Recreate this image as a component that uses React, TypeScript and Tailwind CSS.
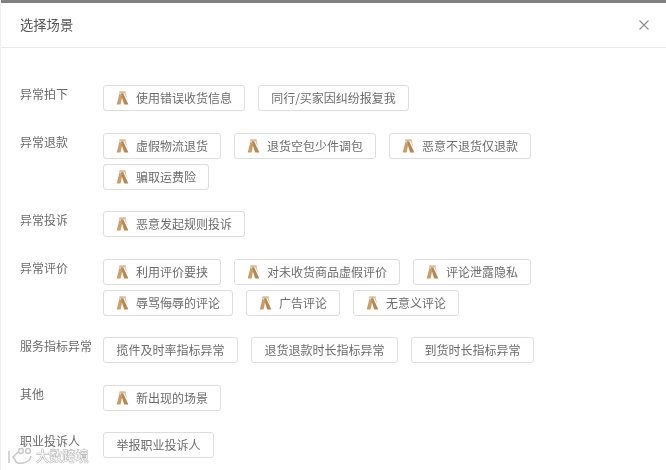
import React from "react";

const Icon = () => (
  <svg width="13" height="16" viewBox="0 0 13 16" className="shrink-0 mr-[7px]" fill="none">
    <path d="M3.4 1.2H9.6L9.9 3.2H3.1Z" fill="#dcbb96" />
    <path d="M3.6 3.2L6.2 6.4L4.6 14.6H0.7Z" fill="#c99c68" />
    <path d="M4.6 3.2H7.2L12.4 14.6H8.2Z" fill="#b98850" />
    <path d="M8.4 3.2H9.6L11.4 9.4Z" fill="#d6b48c" />
  </svg>
);

type Item = { t: string; i?: boolean; w: number };

const Btn = ({ t, i, w }: Item) => (
  <div
    style={{ width: w }}
    className={`h-[26px] flex items-center rounded-[3px] border border-[#dddddd] bg-white text-xs text-[#6b6b6b] whitespace-nowrap ${i ? "pl-[12px]" : "justify-center"}`}
  >
    {i && <Icon />}
    <span>{t}</span>
  </div>
);

const sections: { label: string; items: Item[] }[] = [
  { label: "异常拍下", items: [{ t: "使用错误收货信息", i: true, w: 142 }, { t: "同行/买家因纠纷报复我", w: 151 }] },
  {
    label: "异常退款",
    items: [
      { t: "虚假物流退货", i: true, w: 118 },
      { t: "退货空包少件调包", i: true, w: 142 },
      { t: "恶意不退货仅退款", i: true, w: 142 },
      { t: "骗取运费险", i: true, w: 106 },
    ],
  },
  { label: "异常投诉", items: [{ t: "恶意发起规则投诉", i: true, w: 142 }] },
  {
    label: "异常评价",
    items: [
      { t: "利用评价要挟", i: true, w: 118 },
      { t: "对未收货商品虚假评价", i: true, w: 166 },
      { t: "评论泄露隐私", i: true, w: 118 },
      { t: "辱骂侮辱的评论", i: true, w: 130 },
      { t: "广告评论", i: true, w: 94 },
      { t: "无意义评论", i: true, w: 106 },
    ],
  },
  {
    label: "服务指标异常",
    items: [
      { t: "揽件及时率指标异常", w: 135 },
      { t: "退货退款时长指标异常", w: 147 },
      { t: "到货时长指标异常", w: 123 },
    ],
  },
  { label: "其他", items: [{ t: "新出现的场景", i: true, w: 118 }] },
  { label: "职业投诉人", items: [{ t: "举报职业投诉人", w: 111 }] },
];

export default function App() {
  return (
    <div
      className="relative w-[666px] h-[470px] overflow-hidden bg-white border-l border-[#eeeeee] blur-[0.5px]"
      style={{ fontFamily: '"Noto Sans CJK SC", "Liberation Sans", sans-serif' }}
    >
      <div className="h-[3px] -ml-px bg-[#808080]" />
      <div className="h-[45px] border-b border-[#eaeaea] flex items-center justify-between pl-[19px] pr-[17px]">
        <span className="text-[13.3px] text-[#555555] pb-[1px]">选择场景</span>
        <svg width="10" height="10" viewBox="0 0 10 10" stroke="#8c8c8c" strokeWidth="1.1">
          <path d="M0.5 0.5L9.5 9.5M9.5 0.5L0.5 9.5" />
        </svg>
      </div>
      <div className="pt-[37px] pl-[19px] flex flex-col gap-[21.5px]">
        {sections.map((s) => (
          <div key={s.label} className="flex">
            <div className="w-[83px] shrink-0 text-xs leading-[17px] text-[#6b6b6b]">{s.label}</div>
            <div className="w-[450px] flex flex-wrap gap-x-[13px] gap-y-[5px]">
              {s.items.map((it) => (
                <Btn key={it.t} {...it} />
              ))}
            </div>
          </div>
        ))}
      </div>
      <div className="absolute left-[6px] top-[447px] flex items-center gap-[2px]">
        <svg width="27" height="18" viewBox="0 0 27 18" fill="none" stroke="#c9c9c9" strokeWidth="1.5">
          <path d="M2 4V16M11 5L6 10L10 16" />
          <path d="M10 16C18 17 23 14 24 9" />
          <circle cx="14" cy="4" r="2.4" />
          <circle cx="21" cy="4" r="2.4" />
        </svg>
        <span
          className="text-[13.2px] leading-[18px] text-white font-bold"
          style={{ WebkitTextStroke: "0.6px #bdbdbd" }}
        >
          大数跨境
        </span>
      </div>
    </div>
  );
}
